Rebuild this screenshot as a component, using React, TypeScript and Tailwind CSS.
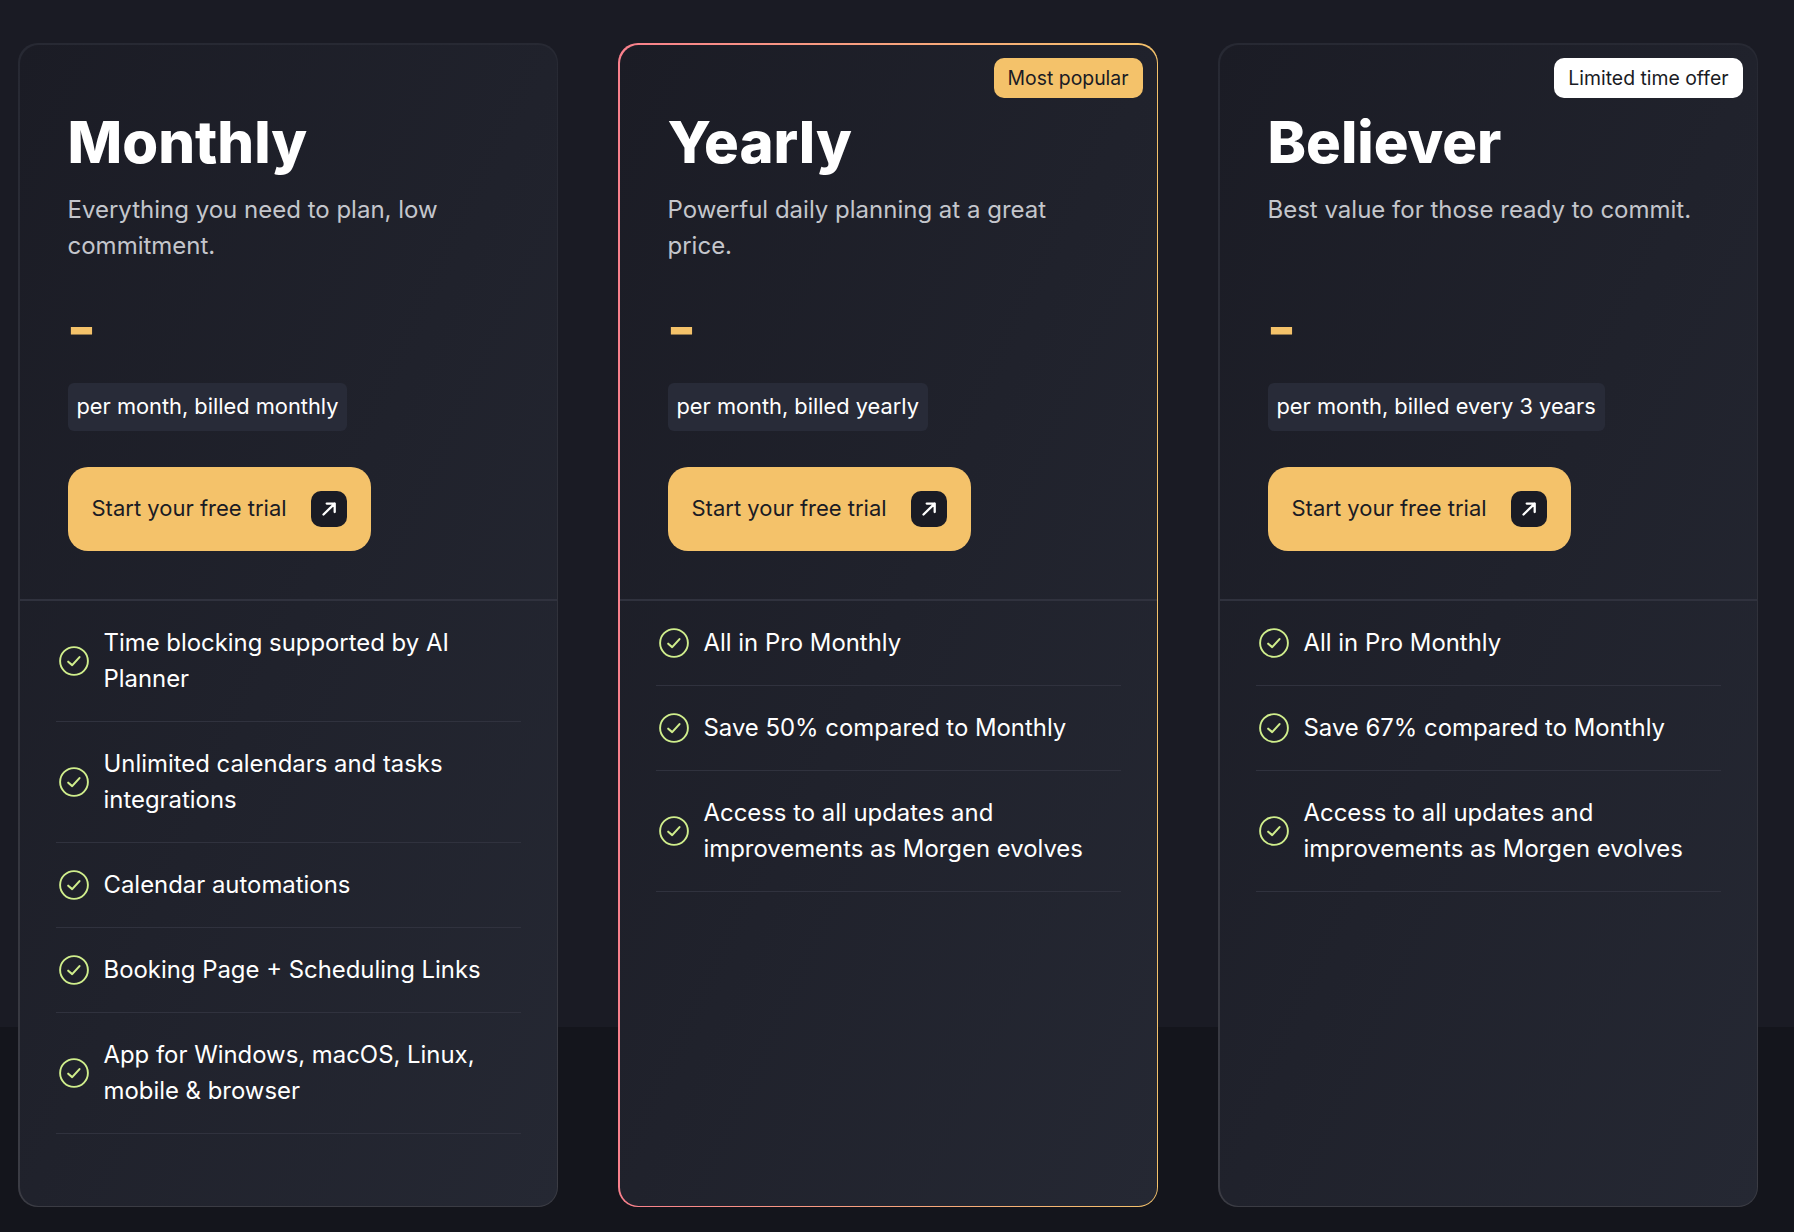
interface Plan {
  name: string;
  description: string;
  billing: string;
  features: string[];
  badge?: string;
  badgeClass?: string;
  highlighted?: boolean;
}

const plans: Plan[] = [
  {
    name: "Monthly",
    description: "Everything you need to plan, low commitment.",
    billing: "per month, billed monthly",
    features: [
      "Time blocking supported by AI Planner",
      "Unlimited calendars and tasks integrations",
      "Calendar automations",
      "Booking Page + Scheduling Links",
      "App for Windows, macOS, Linux, mobile & browser",
    ],
  },
  {
    name: "Yearly",
    description: "Powerful daily planning at a great price.",
    billing: "per month, billed yearly",
    badge: "Most popular",
    badgeClass: "bg-[#f4c26a]",
    highlighted: true,
    features: [
      "All in Pro Monthly",
      "Save 50% compared to Monthly",
      "Access to all updates and improvements as Morgen evolves",
    ],
  },
  {
    name: "Believer",
    description: "Best value for those ready to commit.",
    billing: "per month, billed every 3 years",
    badge: "Limited time offer",
    badgeClass: "bg-white",
    features: [
      "All in Pro Monthly",
      "Save 67% compared to Monthly",
      "Access to all updates and improvements as Morgen evolves",
    ],
  },
];

function CheckIcon() {
  return (
    <svg width="30" height="30" viewBox="0 0 30 30" fill="none" className="shrink-0">
      <circle cx="15" cy="15" r="13.9" stroke="#d0ee8c" strokeWidth="1.9" />
      <path d="M9.2 15.7l4 3.4 7.3-8" stroke="#d0ee8c" strokeWidth="2.1" strokeLinecap="round" strokeLinejoin="round" />
    </svg>
  );
}

function ArrowIcon() {
  return (
    <svg width="36" height="36" viewBox="0 0 36 36" fill="none">
      <path d="M12.5 23.5L23.7 12.6M15.7 12.6h8v8.4" stroke="#fff" strokeWidth="2.3" strokeLinecap="round" strokeLinejoin="round" />
    </svg>
  );
}

function PlanCard({ plan }: { plan: Plan }) {
  return (
    <div
      className={`w-[540px] h-[1164px] rounded-[20px] p-[1.5px] ${
        plan.highlighted
          ? "bg-gradient-to-r from-[#f9808c] to-[#f4c26a]"
          : "bg-gradient-to-b from-[#272933] to-[#3b3c44]"
      }`}
    >
      <div className="relative h-full rounded-[18.5px] bg-gradient-to-br from-[#1b1c25] to-[#252833]">
        {plan.badge && (
          <span
            className={`absolute top-[13px] right-[14px] h-10 pt-[2px] px-[14px] flex items-center rounded-[10px] text-[19.4px] text-[#1a1b24] ${plan.badgeClass}`}
          >
            {plan.badge}
          </span>
        )}

        <div className="h-[556px] pl-[48px] pr-[36px] pt-[62px] border-b-2 border-[#30323e]">
          <h2 className="text-[58px] leading-[70px] font-extrabold text-white">{plan.name}</h2>
          <p className="mt-[15px] h-[72px] max-w-[440px] text-[24px] leading-[36px] text-[#c4c6cc]">{plan.description}</p>
          <div className="mt-[28px] -ml-px h-[70px] text-[64px] leading-[70px] font-bold text-[#f4c26a]">-</div>
          <span className="mt-[21px] inline-block h-12 px-[9px] rounded-md bg-[#282b38] text-[21.8px] leading-[47px] text-white">
            {plan.billing}
          </span>
          <button className="mt-9 flex items-center w-[303px] h-[84px] pl-6 pr-6 justify-between rounded-[20px] bg-[#f4c26a] text-[22px] text-[#1a1b24]">
            Start your free trial
            <span className="w-9 h-9 flex items-center justify-center rounded-[10px] bg-[#1a1b24]">
              <ArrowIcon />
            </span>
          </button>
        </div>

        <ul className="px-9">
          {plan.features.map((feature) => (
            <li key={feature} className="flex items-center gap-[15px] py-6 pl-[3px] border-b border-[#30323e]">
              <CheckIcon />
              <span className="text-[23.9px] leading-[36px] text-white">{feature}</span>
            </li>
          ))}
        </ul>
      </div>
    </div>
  );
}

export default function App() {
  return (
    <div className="h-[1232px] overflow-hidden bg-[linear-gradient(#1a1b24_1027px,#14151c_1027px)] font-['Inter',sans-serif]">
      <div className="flex gap-[60px] pl-[18px] pt-[43px]">
        {plans.map((plan) => (
          <PlanCard key={plan.name} plan={plan} />
        ))}
      </div>
    </div>
  );
}
